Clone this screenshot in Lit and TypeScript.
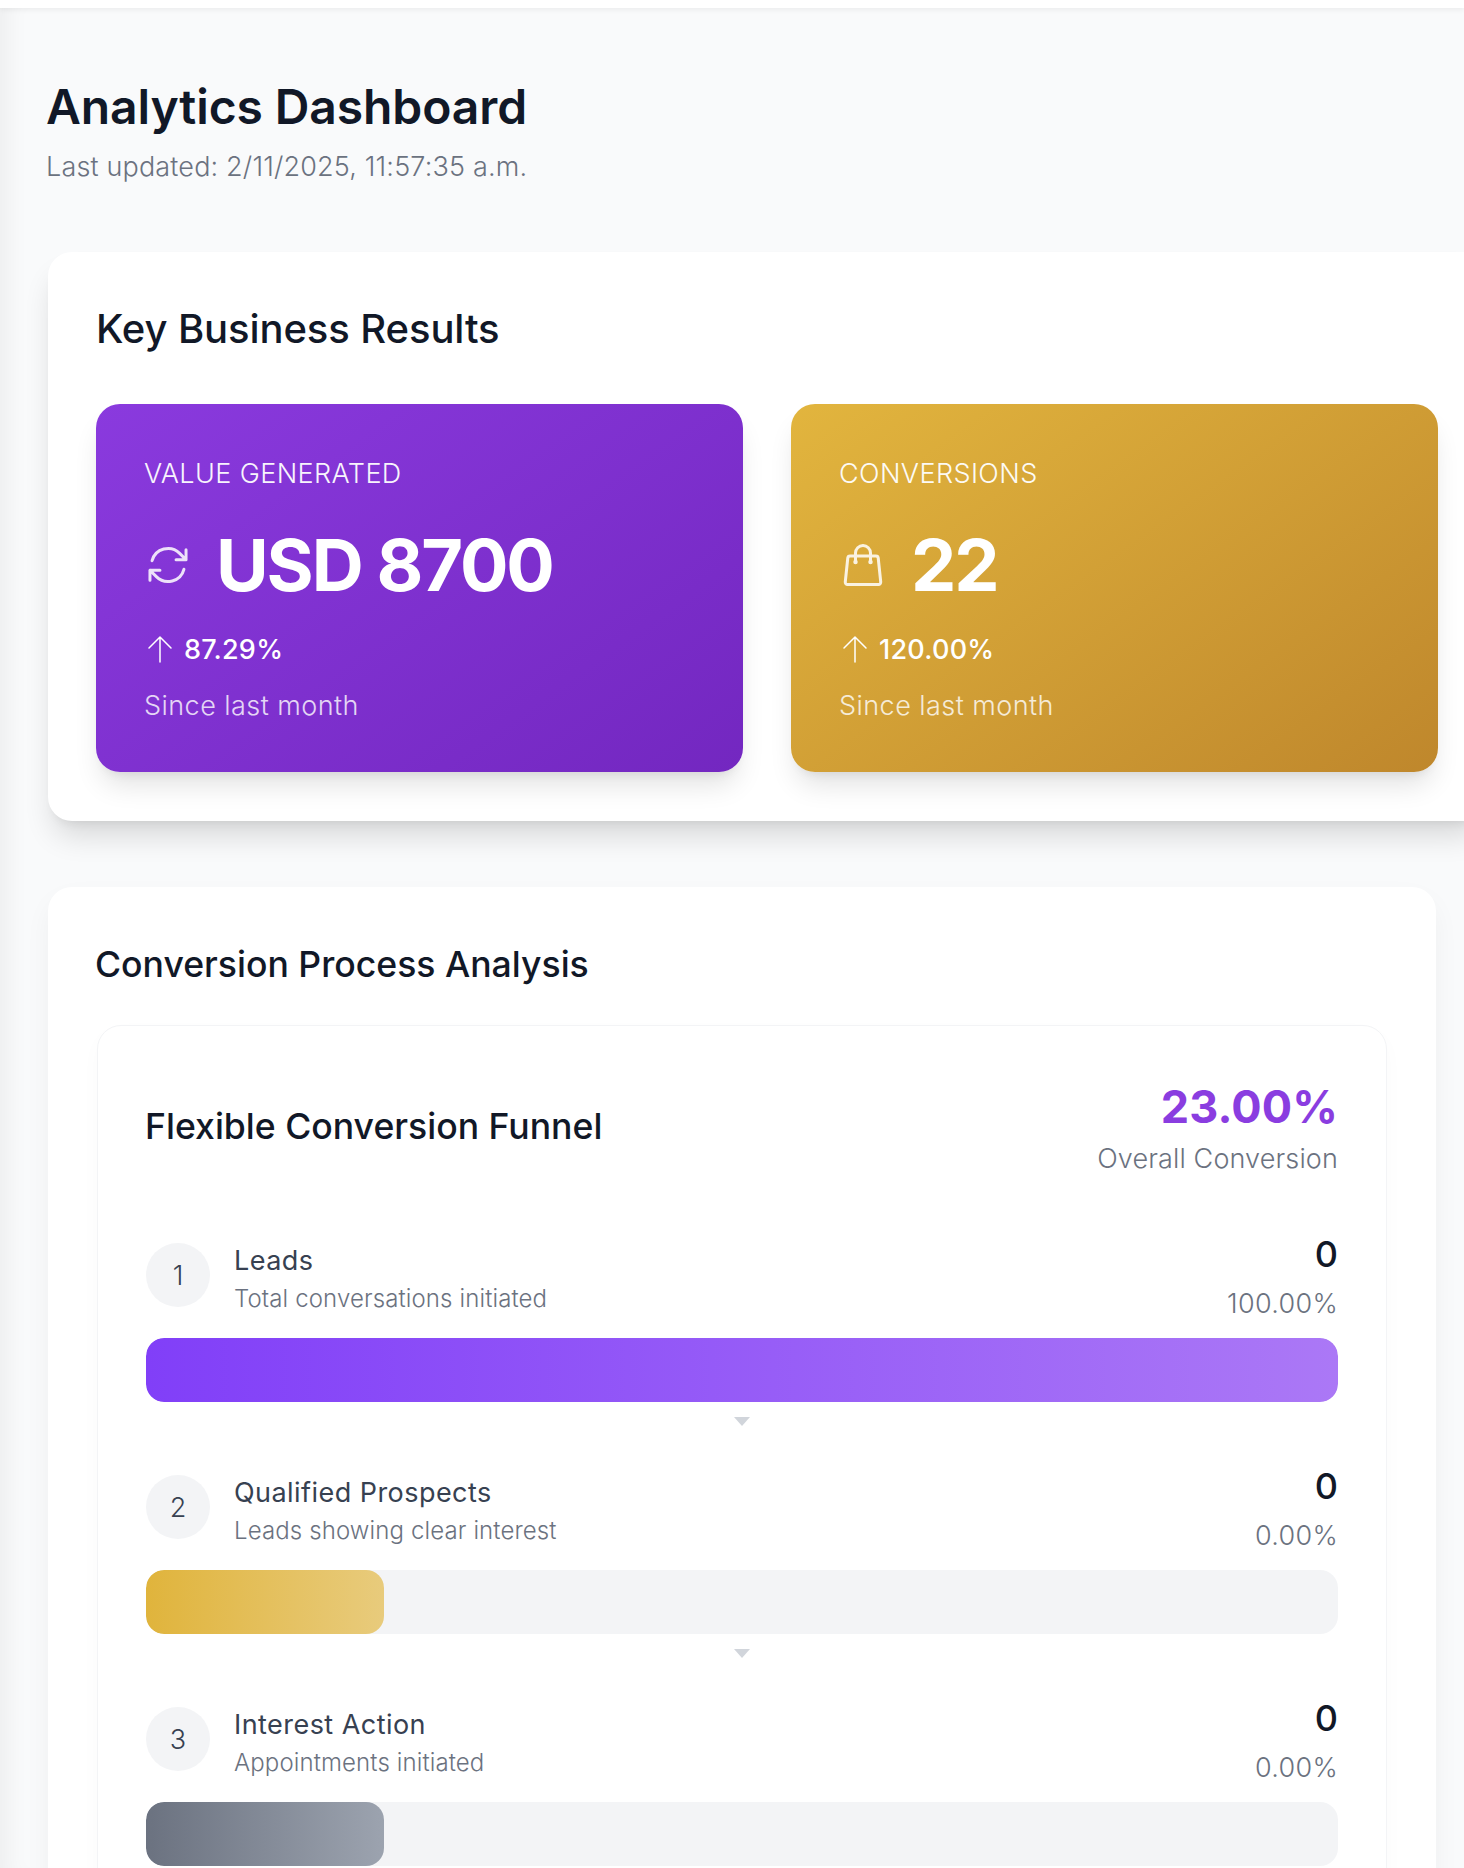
import { LitElement, html, css, svg } from "lit";
import { customElement } from "lit/decorators.js";

const refreshIcon = svg`<path d="M16.023 9.348h4.992v-.001M2.985 19.644v-4.992m0 0h4.992m-4.993 0 3.181 3.183a8.25 8.25 0 0 0 13.803-3.7M4.031 9.865a8.25 8.25 0 0 1 13.803-3.7l3.181 3.182m0-4.991v4.99"/>`;
const bagIcon = svg`<path d="M15.75 10.5V6a3.75 3.75 0 1 0-7.5 0v4.5m11.356-1.993 1.263 12c.07.665-.45 1.243-1.119 1.243H4.25a1.125 1.125 0 0 1-1.12-1.243l1.264-12A1.125 1.125 0 0 1 5.513 7.5h12.974c.576 0 1.059.435 1.119 1.007ZM8.625 10.5a.375.375 0 1 1-.75 0 .375.375 0 0 1 .75 0Zm7.5 0a.375.375 0 1 1-.75 0 .375.375 0 0 1 .75 0Z"/>`;

const steps = [
  { n: 1, name: "Leads", desc: "Total conversations initiated", value: "0", pct: "100.00%", width: 100, cls: "purple" },
  { n: 2, name: "Qualified Prospects", desc: "Leads showing clear interest", value: "0", pct: "0.00%", width: 20, cls: "gold" },
  { n: 3, name: "Interest Action", desc: "Appointments initiated", value: "0", pct: "0.00%", width: 20, cls: "grey" },
];

const kpis = [
  { label: "VALUE GENERATED", value: "USD 8700", change: "87.29%", icon: refreshIcon, cls: "violet" },
  { label: "CONVERSIONS", value: "22", change: "120.00%", icon: bagIcon, cls: "amber" },
];

@customElement("app-root")
export class AppRoot extends LitElement {
  static override styles = css`
    :host {
      display: block;
      height: 1868px;
      overflow: hidden;
      background: #f9fafb;
      font-family: "Inter", "Noto Sans", sans-serif;
      color: #111827;
    }

    .topbar {
      height: 8px;
      background: #fff;
      box-shadow: 0 2px 5px rgba(0, 0, 0, 0.06);
      position: relative;
    }

    .main {
      height: 1860px;
      box-sizing: border-box;
      padding: 63px 28px 0 48px;
      box-shadow: inset 24px 0 22px -16px rgba(0, 0, 0, 0.05);
    }

    h1 {
      margin: 0 0 0 -2px;
      font-size: 48px;
      line-height: 72px;
      font-weight: 600;
      letter-spacing: -0.1px;
      color: #111827;
    }

    .updated {
      font-size: 27px;
      line-height: 40px;
      font-weight: 300;
      letter-spacing: 0.16px;
      color: #6b7280;
      margin: 4px 0 0 -2px;
    }

    .results {
      width: 1438px;
      height: 569px;
      box-sizing: border-box;
      margin-top: 65px;
      padding: 48px;
      background: #fff;
      border-radius: 24px;
      box-shadow: 0 20px 30px -6px rgba(0, 0, 0, 0.14), 0 8px 12px -8px rgba(0, 0, 0, 0.1);
    }

    h2 {
      margin: 0;
      font-weight: 500;
      color: #111827;
    }

    .results h2 {
      font-size: 40px;
      line-height: 58px;
      letter-spacing: -0.1px;
      margin-bottom: 46px;
    }

    .kpi-grid {
      display: grid;
      grid-template-columns: 1fr 1fr;
      gap: 48px;
      width: 1342px;
    }

    .kpi {
      height: 368px;
      box-sizing: border-box;
      padding: 49px 48px 48px;
      border-radius: 24px;
      color: #fff;
      box-shadow: 0 18px 28px -6px rgba(0, 0, 0, 0.12), 0 8px 12px -8px rgba(0, 0, 0, 0.1);
    }

    .kpi.violet {
      background: linear-gradient(145deg, #8a3ade, #7327c0);
    }

    .kpi.amber {
      background: linear-gradient(145deg, #e2b53e, #bf872c);
    }

    .kpi-label {
      font-size: 27px;
      line-height: 42px;
      font-weight: 300;
      letter-spacing: 0.4px;
      opacity: 0.95;
    }

    .kpi-value {
      display: flex;
      align-items: center;
      gap: 24px;
      margin-top: 34px;
      font-size: 72px;
      line-height: 72px;
      font-weight: 700;
      letter-spacing: -2.1px;
    }

    .kpi-value svg {
      width: 48px;
      height: 48px;
      fill: none;
      stroke: #fff;
      stroke-opacity: 0.85;
      stroke-width: 1.5;
      stroke-linecap: round;
      stroke-linejoin: round;
      flex: none;
    }

    .kpi-change {
      display: flex;
      align-items: center;
      gap: 8px;
      margin-top: 29px;
      font-size: 27px;
      line-height: 40px;
      font-weight: 500;
      letter-spacing: 0.25px;
    }

    .kpi-change svg {
      width: 32px;
      height: 32px;
      fill: none;
      stroke: #fff;
      stroke-width: 1.5;
      stroke-linecap: round;
      stroke-linejoin: round;
    }

    .kpi-note {
      font-size: 27px;
      line-height: 40px;
      font-weight: 300;
      letter-spacing: 0.45px;
      opacity: 0.8;
      margin-top: 16px;
    }

    .process {
      width: 1388px;
      box-sizing: border-box;
      margin-top: 66px;
      padding: 48px;
      background: #fff;
      border-radius: 24px;
      box-shadow: 0 12px 30px -4px rgba(0, 0, 0, 0.06);
    }

    .process h2 {
      font-size: 35.6px;
      line-height: 52px;
      margin: 4px 0 34px -1px;
    }

    .funnel {
      box-sizing: border-box;
      padding: 48px;
      border: 1.5px solid #f3f4f6;
      border-radius: 24px;
      box-shadow: 0 8px 24px -4px rgba(0, 0, 0, 0.03);
      margin: 0 1px;
    }

    .funnel-head {
      display: flex;
      justify-content: space-between;
      align-items: center;
      margin-bottom: 47px;
    }

    .funnel-head h3 {
      margin: 0 0 0 -1px;
      font-size: 35.6px;
      line-height: 52px;
      font-weight: 500;
      color: #111827;
    }

    .overall {
      text-align: right;
    }

    .overall-num {
      font-size: 45px;
      line-height: 65px;
      font-weight: 700;
      letter-spacing: 0.1px;
      color: #8a3de0;
    }

    .overall-label {
      font-size: 27px;
      line-height: 40px;
      font-weight: 300;
      letter-spacing: 0.13px;
      color: #6b7280;
    }

    .step-head {
      display: flex;
      align-items: center;
      justify-content: space-between;
    }

    .step-left {
      display: flex;
      align-items: center;
      gap: 24px;
    }

    .step-text {
      padding-top: 8px;
    }

    .step-num {
      width: 64px;
      height: 64px;
      border-radius: 50%;
      background: #f3f4f6;
      color: #374151;
      display: flex;
      align-items: center;
      justify-content: center;
      font-size: 27px;
      font-weight: 300;
    }

    .step-name {
      font-size: 27px;
      line-height: 40px;
      font-weight: 400;
      letter-spacing: 0.45px;
      color: #374151;
    }

    .step-desc {
      font-size: 24px;
      line-height: 36px;
      font-weight: 300;
      letter-spacing: 0.12px;
      color: #6b7280;
    }

    .step-right {
      text-align: right;
    }

    .step-value {
      font-size: 36px;
      line-height: 54px;
      font-weight: 500;
      padding-top: 1px;
      color: #111827;
    }

    .step-pct {
      margin-top: 3px;
      font-size: 27px;
      line-height: 40px;
      font-weight: 300;
      letter-spacing: 0.3px;
      color: #6b7280;
    }

    .bar {
      height: 64px;
      margin-top: 14px;
      background: #f3f4f6;
      border-radius: 18px;
      overflow: hidden;
    }

    .fill {
      height: 100%;
      border-radius: 18px;
    }

    .fill.purple {
      background: linear-gradient(90deg, #813ff8, #ab78f6);
    }

    .fill.gold {
      background: linear-gradient(90deg, #e0b43c, #e8cb7c);
    }

    .fill.grey {
      background: linear-gradient(90deg, #6b7280, #9ca3af);
    }

    .step {
      margin-bottom: 56px;
      position: relative;
    }

    .step:not(:last-child)::after {
      content: "";
      position: absolute;
      left: 50%;
      margin-left: -8px;
      bottom: -24px;
      border-left: 8px solid transparent;
      border-right: 8px solid transparent;
      border-top: 9px solid #d1d5db;
    }
  `;

  override render() {
    return html`
      <div class="topbar"></div>
      <div class="main">
        <h1>Analytics Dashboard</h1>
        <div class="updated">Last updated: 2/11/2025, 11:57:35 a.m.</div>

        <section class="results">
          <h2>Key Business Results</h2>
          <div class="kpi-grid">
            ${kpis.map(
              (k) => html`
                <div class="kpi ${k.cls}">
                  <div class="kpi-label">${k.label}</div>
                  <div class="kpi-value">
                    <svg viewBox="0 0 24 24">${k.icon}</svg>
                    <span>${k.value}</span>
                  </div>
                  <div class="kpi-change">
                    <svg viewBox="0 0 32 32"><path d="M16 28V3M5 14L16 3l11 11" /></svg>
                    <span>${k.change}</span>
                  </div>
                  <div class="kpi-note">Since last month</div>
                </div>
              `
            )}
          </div>
        </section>

        <section class="process">
          <h2>Conversion Process Analysis</h2>
          <div class="funnel">
            <div class="funnel-head">
              <h3>Flexible Conversion Funnel</h3>
              <div class="overall">
                <div class="overall-num">23.00%</div>
                <div class="overall-label">Overall Conversion</div>
              </div>
            </div>
            ${steps.map(
              (s) => html`
                <div class="step">
                  <div class="step-head">
                    <div class="step-left">
                      <div class="step-num">${s.n}</div>
                      <div class="step-text">
                        <div class="step-name">${s.name}</div>
                        <div class="step-desc">${s.desc}</div>
                      </div>
                    </div>
                    <div class="step-right">
                      <div class="step-value">${s.value}</div>
                      <div class="step-pct">${s.pct}</div>
                    </div>
                  </div>
                  <div class="bar">
                    <div class="fill ${s.cls}" style="width: ${s.width}%"></div>
                  </div>
                </div>
              `
            )}
          </div>
        </section>
      </div>
    `;
  }
}
